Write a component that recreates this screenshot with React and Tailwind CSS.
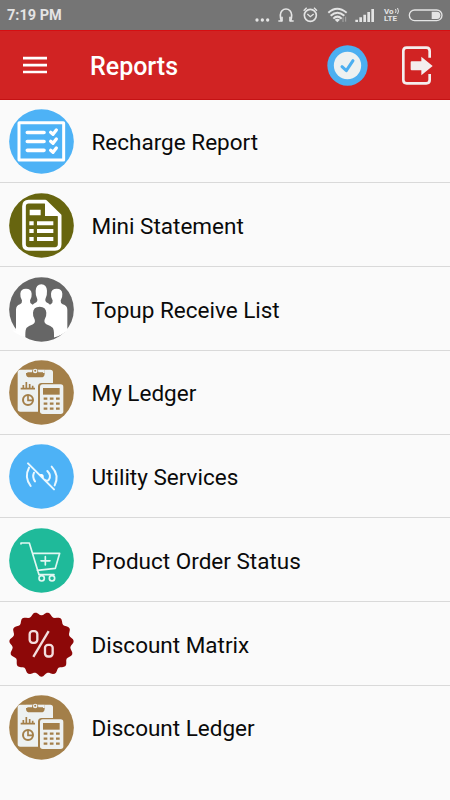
import React from "react";

const sealPoints = (() => {
  const pts = [];
  const n = 15;
  for (let i = 0; i < n * 8; i++) {
    const a = (i / (n * 8)) * Math.PI * 2 + Math.PI / 2;
    const r = 92 + 5 * Math.cos((i / 8) * Math.PI * 2);
    pts.push(`${(124.5 + r * Math.cos(a)).toFixed(1)},${(122.5 + r * Math.sin(a)).toFixed(1)}`);
  }
  return pts.join(" ");
})();

function Badge({ top = 26, color, children }) {
  return (
    <svg className="mt-[1.500px] h-[65px] w-[65px] shrink-0" viewBox={`27 ${top} 195 195`} fill="none">
      {color && <circle cx="124.5" cy={top + 97.5} r="97" fill={color} />}
      {children}
    </svg>
  );
}

function RechargeIcon() {
  return (
    <Badge top={27} color="#4db2f6">
      <rect x="57" y="68" width="134" height="112" rx="1" stroke="#fff" strokeWidth="9" />
      <path d="M82 97.500h50M82 124.500h50M82 151h50" stroke="#fff" strokeWidth="11" strokeLinecap="round" />
      <path d="M152 97l7 6 10-13M152 124l7 6 10-13M152 151l7 6 10-13" stroke="#fff" strokeWidth="10" strokeLinecap="round" strokeLinejoin="round" />
    </Badge>
  );
}

function StatementIcon() {
  return (
    <Badge color="#67650f">
      <path d="M86 52h50l43 42v86q0 14-14 14H86q-14 0-14-14V66q0-14 14-14z" stroke="#fff" strokeWidth="11" strokeLinejoin="round" />
      <path d="M135 50v45h45z" fill="#fff" />
      <path d="M89 76h33v17H89zM88 111h13v12H88zM111 111h49v12h-49zM88 134h13v12H88zM111 134h49v12h-49zM88 158h13v12H88zM111 158h49v12h-49z" fill="#fff" />
    </Badge>
  );
}

function PeopleIcon() {
  return (
    <Badge top={25.5} color="#666">
      <path d="M48 187v-63q0-14 12-17 7-3 6-11-6-8-5-20 1-15 17-15t17 15q1 12-5 20-1 8 6 11l2 2q3-5 11-8 4-3 3-9-6-9-5-25 1-20 17-20t17 20q1 16-5 25-1 6 3 9 8 3 11 8l2-2q7-3 6-11-6-8-5-20 1-15 17-15t17 15q1 12-5 20-1 8 6 11 14 3 14 17v61q-14 14-40 22v-9q0-15-4-20-5-6-19-11-8-4-5-14 6-9 5-20-1-18-20-18t-20 18q-1 11 5 20 3 10-5 14-14 5-19 11-4 5-4 20v9q-26-10-40-22z" fill="#fff" />
    </Badge>
  );
}

function LedgerIcon() {
  return (
    <Badge top={25} color="#a37f49">
      <path d="M61 54h17v12q0 11 11 11h34q11 0 11-11V54h17q8 0 8 8v32h-34q-11 0-11 11v75H61q-8 0-8-8V62q0-8 8-8z" fill="#edf1f1" />
      <path d="M78 54h56v10h-56z" fill="#edf1f1" />
      <path d="M82 62h14c0-16 19-16 19 0h14v6q0 7-7 7H89q-7 0-7-7z" fill="#a37f49" />
      <circle cx="105.500" cy="58" r="7" fill="#edf1f1" />
      <circle cx="105.500" cy="57" r="3" fill="#a37f49" />
      <path d="M62 111h43M70 111v-11M79 111V91M89 111V97M98 111v-9" stroke="#a37f49" strokeWidth="5" />
      <circle cx="84" cy="145" r="15" stroke="#a37f49" strokeWidth="6" />
      <path d="M84 131v15h15" stroke="#a37f49" strokeWidth="5" />
      <rect x="120" y="98" width="70" height="89" rx="8" fill="#edf1f1" />
      <path d="M129 109h50v20h-50z" fill="#a37f49" />
      <path d="M131 141h48M131 156h48M131 171h48" stroke="#a37f49" strokeWidth="7" strokeDasharray="11 7.5" />
    </Badge>
  );
}

function UtilityIcon() {
  return (
    <Badge top={27} color="#4db2f6">
      <g stroke="#eaf8ff" strokeWidth="6" strokeLinecap="round">
        <path d="M84 85l78 78" />
        <path d="M87 98q-15 28 5 55M102 113q-6 13 3 26M155 95q24 26 9 56M142 108q14 14 4 27q-5 4-11 0" />
      </g>
      <path d="M117 118l8-1q5 1 6 5v8z" fill="#fff" />
    </Badge>
  );
}

function CartIcon() {
  return (
    <Badge color="#1fba9a">
      <g stroke="#e2f7f2" strokeWidth="5" strokeLinecap="round" strokeLinejoin="round">
        <path d="M63 74v-3h25l29 95h45M99 102h80l-13 45-54 6M136 112v25M123 124.500h27" />
        <circle cx="125" cy="177" r="8" />
        <circle cx="156" cy="177" r="8" />
      </g>
    </Badge>
  );
}

function DiscountIcon() {
  return (
    <Badge top={25.5}>
      <polygon points={sealPoints} fill="#8d0808" />
      <g stroke="#f3dede" strokeWidth="7">
        <rect x="89" y="83" width="23" height="35" rx="9" />
        <rect x="135" y="124" width="23" height="35" rx="9" />
        <path d="M146 83l-46 77" />
      </g>
    </Badge>
  );
}

const items = [
  ["Recharge Report", RechargeIcon],
  ["Mini Statement", StatementIcon],
  ["Topup Receive List", PeopleIcon],
  ["My Ledger", LedgerIcon],
  ["Utility Services", UtilityIcon],
  ["Product Order Status", CartIcon],
  ["Discount Matrix", DiscountIcon],
  ["Discount Ledger", LedgerIcon],
];

function SignalIcons() {
  return (
    <svg className="h-[30px] w-[143px]" viewBox="0 0 429 90" fill="none" stroke="#e4e4e4" strokeWidth="5">
      <g fill="#e4e4e4" stroke="none">
        <circle cx="51" cy="60" r="5" />
        <circle cx="67" cy="60" r="5" />
        <circle cx="83" cy="60" r="5" />
      </g>
      <path d="M115 63h9q-3-8-3-18a17 18 0 0 1 34 0q0 10-3 18h9" />
      <path d="M126 50v14M150 50v14" />
      <circle cx="211" cy="46" r="18" />
      <path d="M202 42l9 8 10-8M191 32l9-9M231 32l-9-9" strokeWidth="4" />
      <path d="M265 38q26-24 55 0M272 47q20-18 41 0M280 56q12-12 25 0" strokeWidth="6" />
      <path d="M284 59q8-6 16 0l-8 8z" fill="#e4e4e4" stroke="none" />
      <path d="M309 52v14M317 50v15" stroke="#a9a9a9" strokeWidth="3" />
      <path d="M350 66v-7M362 66V52M374 66V44M386 66V36M398 66V27" strokeWidth="8" />
    </svg>
  );
}

function Battery() {
  return (
    <svg className="h-[30px] w-[48px]" viewBox="486 0 144 90" fill="none">
      <rect x="508" y="30" width="98" height="32" rx="16" stroke="#e4e4e4" strokeWidth="4" />
      <path d="M575 35h16q10 0 10 11t-10 11h-16z" fill="#e4e4e4" />
    </svg>
  );
}

function VoLte() {
  return (
    <div className="flex w-[19px] flex-col pl-px text-[8px] font-bold leading-[7.500px] text-[#e4e4e4]">
      <div className="flex items-center gap-px">
        <span>Vo</span>
        <svg className="h-[6px] w-[4px]" viewBox="0 0 4 6" fill="none" stroke="#e4e4e4">
          <path d="M.5 1q1.200 2 0 4M2.500 0q2 3 0 6" />
        </svg>
      </div>
      <span>LTE</span>
    </div>
  );
}

export default function App() {
  return (
    <div className="flex h-[800px] w-[450px] flex-col overflow-hidden bg-[#fafafa] font-[Roboto,sans-serif]">
      <div className="flex h-[30px] shrink-0 items-center justify-between bg-[#757575] pl-[7px]">
        <span className="pt-[3px] text-[14.500px] font-bold leading-none text-[#e4e4e4]">7:19 PM</span>
        <div className="flex items-center">
          <SignalIcons />
          <VoLte />
          <Battery />
        </div>
      </div>
      <header className="flex h-[69.500px] shrink-0 items-center border-y border-t-[#d50f12] border-b-[#c41214] bg-[#d12323] pl-[23px]">
        <svg className="h-[18px] w-6" viewBox="0 0 24 18" stroke="#fff" strokeWidth="2.600">
          <path d="M0 2.100h24M0 9.100h24M0 16h24" />
        </svg>
        <h1 className="ml-[43px] w-[237px] pt-[3px] text-[25px] font-medium leading-none text-white">Reports</h1>
        <svg className="mt-px h-[41px] w-[41px]" viewBox="0 0 123 123" fill="none">
          <circle cx="61.5" cy="61.5" r="60.5" fill="#4caff1" />
          <circle cx="61.5" cy="61.5" r="41" fill="#edf1f1" />
          <path d="M45 65l13 12 20-30" stroke="#4caff1" strokeWidth="9" strokeLinecap="round" strokeLinejoin="round" />
        </svg>
        <svg className="ml-8 mt-px h-[41px] w-[34px]" viewBox="0 0 102 123" fill="none">
          <path d="M89 38V18Q89 8 79 8H20Q10 8 10 18v87q0 10 10 10h59q10 0 10-10V87" stroke="#f4eeee" strokeWidth="8" />
          <path d="M35 49h29V35l34 28-34 28V76H35q-3 0-3-3V52q0-3 3-3z" fill="#f4eeee" />
        </svg>
      </header>
      <ul className="shrink-0">
        {items.map(([label, Icon]) => (
          <li
            key={label}
            className="flex h-[83.750px] items-center border-b border-[#d9d9d9] pl-[9px] last:border-transparent"
          >
            <Icon />
            <span className="ml-[17.500px] pt-[3px] text-[22.500px] leading-none text-[#0a0a0a]">{label}</span>
          </li>
        ))}
      </ul>
    </div>
  );
}
